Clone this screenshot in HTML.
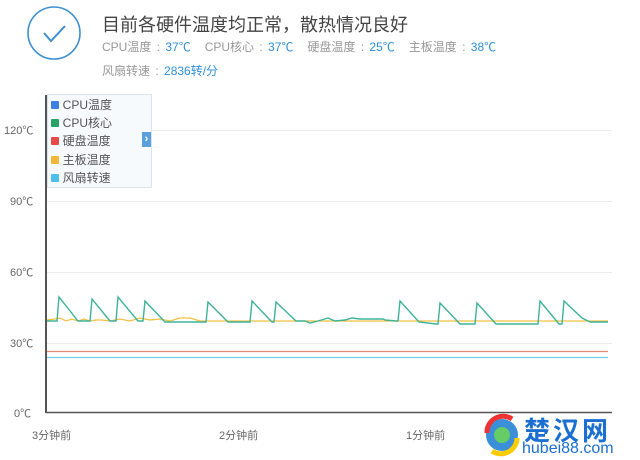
<!DOCTYPE html>
<html><head><meta charset="utf-8"><style>
body{margin:0;width:640px;height:460px;background:#fff;overflow:hidden;font-family:"Liberation Sans","Noto Sans CJK SC",sans-serif;position:relative}
.t{position:absolute;white-space:nowrap}
.g{color:#999;font-size:12px}
.b{color:#2f8fd5}
.c{display:inline-block;width:14px;text-align:center}
.s{display:inline-block;width:14px}
</style></head><body>
<svg class="t" style="left:0;top:0" width="640" height="460">
<circle cx="54" cy="33" r="26" fill="none" stroke="#3d8fd0" stroke-width="1.6"/>
<path d="M44 33 L51 41 L65 26" fill="none" stroke="#3d8fd0" stroke-width="2"/>
<g stroke="#ececec" stroke-width="1">
<line x1="46" y1="130.5" x2="612" y2="130.5"/><line x1="46" y1="201.5" x2="612" y2="201.5"/>
<line x1="46" y1="272.5" x2="612" y2="272.5"/><line x1="46" y1="343.5" x2="612" y2="343.5"/>
</g>
<line x1="46" y1="95" x2="46" y2="413" stroke="#555" stroke-width="2"/>
<line x1="46" y1="412.5" x2="612" y2="412.5" stroke="#555" stroke-width="1.5"/>
<line x1="47" y1="351.5" x2="608" y2="351.5" stroke="#e08a7a" stroke-width="1.2"/>
<line x1="47" y1="357.5" x2="608" y2="357.5" stroke="#6fcfe6" stroke-width="1.2"/>
<polyline fill="none" stroke="#f0c040" stroke-width="1.2" points="47,320 55,319 60,318 66,321 72,319 78,321 84,319 90,321 96,320 102,320 110,321 120,319 130,321 140,318 150,320 160,319 170,321 180,318 190,318 200,321 210,321 608,321"/>
<polyline fill="none" stroke="#3fb39a" stroke-width="1.4" points="47,321 57,321 59,297 78,321 90,321 92,299 110,321 116,321 118,297 138,321 143,321 145,301 165,322 206,322 208,302 228,322 250,322 252,301 272,322 274,322 276,302 296,321 305,321 310,323 318,321 328,318 335,321 345,320 352,318 360,319 383,319 385,320 396,321 398,321 400,301 419,322 436,324 438,324 440,303 460,324 475,324 477,303 496,324 538,324 540,301 559,324 562,324 564,301 582,318 590,322 608,322"/>
</svg>
<div class="t" style="left:102px;top:11px;font-size:18px;color:#444">目前各硬件温度均正常，散热情况良好</div>
<div class="t g" style="left:102px;top:38px">CPU温度<span class="c">:</span><span class="b">37℃</span><span class="s"></span>CPU核心<span class="c">:</span><span class="b">37℃</span><span class="s"></span>硬盘温度<span class="c">:</span><span class="b">25℃</span><span class="s"></span>主板温度<span class="c">:</span><span class="b">38℃</span></div>
<div class="t g" style="left:102px;top:62px">风扇转速<span class="c">:</span><span class="b">2836转/分</span></div>
<div class="t g" style="left:4px;top:122px;color:#666;font-size:11px">120℃</div>
<div class="t g" style="left:10px;top:193px;color:#666;font-size:11px">90℃</div>
<div class="t g" style="left:10px;top:264px;color:#666;font-size:11px">60℃</div>
<div class="t g" style="left:10px;top:335px;color:#666;font-size:11px">30℃</div>
<div class="t g" style="left:14px;top:405px;color:#666;font-size:11px">0℃</div>
<div class="t g" style="left:32px;top:427px;color:#666;font-size:11px">3分钟前</div>
<div class="t g" style="left:219px;top:427px;color:#666;font-size:11px">2分钟前</div>
<div class="t g" style="left:406px;top:427px;color:#666;font-size:11px">1分钟前</div>
<div class="t" style="left:47px;top:94px;width:103px;height:91px;background:#f7fafd;border:1px solid #dde3ea;font-size:12px;color:#555;line-height:18.2px;padding-top:1px">
<div>&nbsp;<span style="display:inline-block;width:8px;height:8px;background:#3c7fe0;border-radius:1px"></span> CPU温度</div>
<div>&nbsp;<span style="display:inline-block;width:8px;height:8px;background:#27a36a;border-radius:1px"></span> CPU核心</div>
<div>&nbsp;<span style="display:inline-block;width:8px;height:8px;background:#e84a4a;border-radius:1px"></span> 硬盘温度</div>
<div>&nbsp;<span style="display:inline-block;width:8px;height:8px;background:#f0b93a;border-radius:1px"></span> 主板温度</div>
<div>&nbsp;<span style="display:inline-block;width:8px;height:8px;background:#4cc0ea;border-radius:1px"></span> 风扇转速</div>
</div>
<div class="t" style="left:142px;top:132px;width:9px;height:15px;background:#5aa0dd;color:#fff;font-size:11px;line-height:15px;text-align:center;font-weight:bold">›</div>
<svg class="t" style="left:482px;top:413px" width="40" height="45"><circle cx="20" cy="22" r="16" fill="#3a8fd8"/><path d="M5 20 A16 16 0 0 1 30 6" stroke="#e33" stroke-width="5" fill="none"/><path d="M35 25 A16 16 0 0 1 10 38" stroke="#fc0" stroke-width="5" fill="none"/><circle cx="20" cy="22" r="8" fill="#6c6"/></svg>
<div class="t" style="left:524px;top:411px;font-size:26px;font-weight:bold;color:#1a6fd0;letter-spacing:3px">楚汉网</div>
<div class="t" style="left:522px;top:440px;font-size:16px;color:#1a6fd0">hubei88.com</div>
</body></html>
